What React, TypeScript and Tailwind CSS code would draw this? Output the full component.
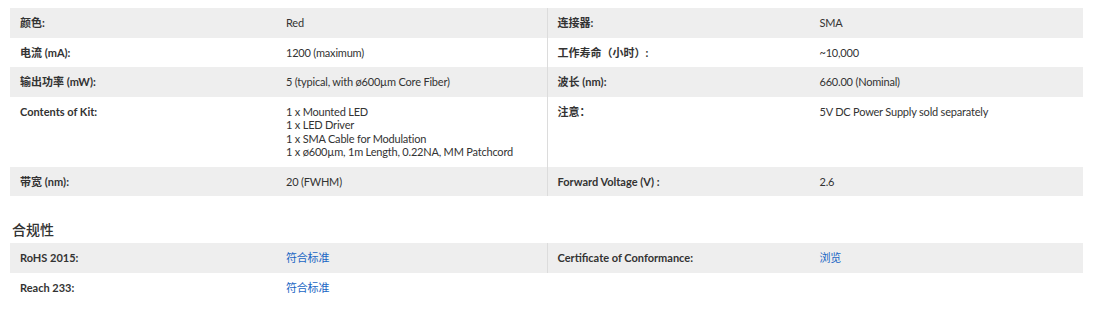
import React from 'react';

type Cell = { label: string; value: React.ReactNode; link?: boolean };
type Row = { left: Cell; right?: Cell; gray?: boolean };

const specs: Row[] = [
  { gray: true, left: { label: '颜色:', value: 'Red' }, right: { label: '连接器:', value: 'SMA' } },
  { left: { label: '电流 (mA):', value: '1200 (maximum)' }, right: { label: '工作寿命（小时）:', value: '~10,000' } },
  {
    gray: true,
    left: { label: '输出功率 (mW):', value: '5 (typical, with ø600µm Core Fiber)' },
    right: { label: '波长 (nm):', value: '660.00 (Nominal)' },
  },
  {
    left: {
      label: 'Contents of Kit:',
      value: (
        <>
          <div>1 x Mounted LED</div>
          <div>1 x LED Driver</div>
          <div>1 x SMA Cable for Modulation</div>
          <div>1 x ø600µm, 1m Length, 0.22NA, MM Patchcord</div>
        </>
      ),
    },
    right: { label: '注意：', value: '5V DC Power Supply sold separately' },
  },
  { gray: true, left: { label: '带宽 (nm):', value: '20 (FWHM)' }, right: { label: 'Forward Voltage (V) :', value: '2.6' } },
];

const compliance: Row[] = [
  {
    gray: true,
    left: { label: 'RoHS 2015:', value: '符合标准', link: true },
    right: { label: 'Certificate of Conformance:', value: '浏览', link: true },
  },
  { left: { label: 'Reach 233:', value: '符合标准', link: true } },
];

const Half = ({ cell, divider }: { cell: Cell; divider?: boolean }) => (
  <div className={`flex w-1/2 ${divider ? 'border-l border-[#dcdcdc]' : ''}`}>
    <div className={`${divider ? 'w-[262px]' : 'w-[266px]'} shrink-0 px-[10px] py-2 font-bold tracking-normal`}>
      {cell.label}
    </div>
    <div className={`flex-1 px-[10px] py-2 tracking-[-0.2px] ${cell.link ? 'text-[#1a66c4]' : ''}`}>{cell.value}</div>
  </div>
);

const Table = ({ rows }: { rows: Row[] }) => (
  <div className="w-[1073px]">
    {rows.map((r, i) => (
      <div key={i} className={`flex ${r.gray ? 'bg-[#eeeeee]' : 'bg-white'}`}>
        <Half cell={r.left} />
        {r.right ? <Half cell={r.right} divider /> : <div className="w-1/2" />}
      </div>
    ))}
  </div>
);

export default function App() {
  return (
    <div
      className="w-[1093px] h-[318px] bg-white pl-[10px] pt-[8px] text-[11px] leading-[13.5px] text-[#333333]"
      style={{ fontFamily: 'Lato, "Noto Sans CJK SC", sans-serif' }}
    >
      <Table rows={specs} />
      <h3 className="pt-[25px] pb-[5px] pl-[2px] text-[14px] leading-[17px] font-medium text-[#333333]">合规性</h3>
      <Table rows={compliance} />
    </div>
  );
}
